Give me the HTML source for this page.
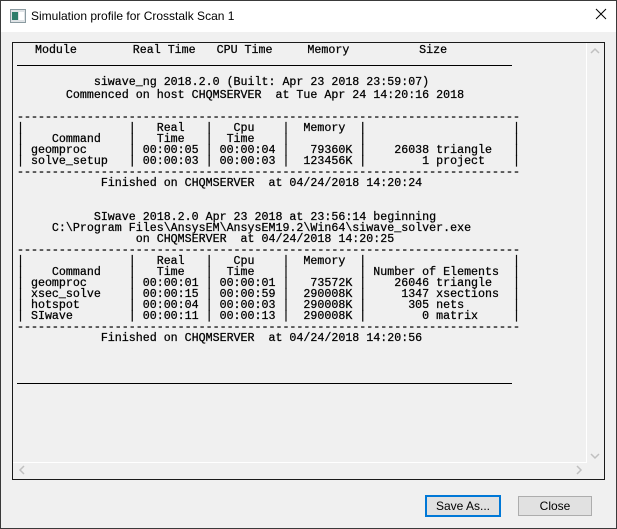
<!DOCTYPE html>
<html><head><meta charset="utf-8"><style>
body{margin:0;width:617px;height:529px;overflow:hidden;background:#f0f0f0;font-family:"Liberation Sans",sans-serif;position:relative}
.win{position:absolute;left:0;top:0;width:615px;height:527px;border:1px solid #3a3a3a;background:#f0f0f0}
.title{position:absolute;left:0;top:0;width:615px;height:31px;background:#fff}
.title .t{position:absolute;left:30px;top:8px;font-size:12px;color:#000}
.x{position:absolute;left:594px;top:7px}
.box{position:absolute;left:12px;top:42px;width:591px;height:436px;border:1px solid #1a1a1a;background:#f0f0f0}
pre{margin:0;position:absolute;font-family:"Liberation Mono",monospace;font-size:11.65px;line-height:11px;color:#000;white-space:pre;-webkit-text-stroke:0.25px #000}
.rule{position:absolute;left:17px;width:495px;height:1px;background:#000}
.btn{position:absolute;top:496px;height:18px;font-size:12px;text-align:center;line-height:18px;background:#e1e1e1;border:1px solid #adadad}
</style></head><body>
<div class="win">
<div class="title">
<svg style="position:absolute;left:9px;top:8px" width="16" height="14"><rect x="0.5" y="0.5" width="15" height="13" fill="#dfe3e6" stroke="#8a9aa0"/><rect x="2" y="3" width="6" height="8" fill="#2e7d6b"/><rect x="9" y="3" width="5" height="8" fill="#fff"/></svg>
<div class="t">Simulation profile for Crosstalk Scan 1</div>
<svg class="x" width="12" height="12"><path d="M1 1L11 11M11 1L1 11" stroke="#000" stroke-width="1"/></svg>
</div>
</div>
<div class="box"></div>
<div style="position:absolute;top:43px;width:1px;height:419px;background:#fff;left:586px"></div>
<div style="position:absolute;left:13px;top:462px;width:574px;height:1px;background:#fff"></div>
<svg style="position:absolute;left:590px;top:47px" width="10" height="8"><path d="M1 6L5 2L9 6" stroke="#c0c0c0" fill="none" stroke-width="1.5"/></svg>
<svg style="position:absolute;left:590px;top:452px" width="10" height="8"><path d="M1 2L5 6L9 2" stroke="#c0c0c0" fill="none" stroke-width="1.5"/></svg>
<svg style="position:absolute;left:18px;top:465px" width="8" height="10"><path d="M6 1L2 5L6 9" stroke="#c0c0c0" fill="none" stroke-width="1.5"/></svg>
<svg style="position:absolute;left:575px;top:465px" width="8" height="10"><path d="M2 1L6 5L2 9" stroke="#c0c0c0" fill="none" stroke-width="1.5"/></svg>
<pre style="left:21px;top:45px">  Module        Real Time   CPU Time     Memory          Size</pre>
<div class="rule" style="top:65px"></div>
<pre style="left:17px;top:77px">           siwave_ng 2018.2.0 (Built: Apr 23 2018 23:59:07)</pre>
<pre style="left:17px;top:90px;line-height:11.05px">       Commenced on host CHQMSERVER  at Tue Apr 24 14:20:16 2018

------------------------------------------------------------------------
|               |   Real   |   Cpu    |  Memory  |                     |
|    Command    |   Time   |  Time    |          |                     |
| geomproc      | 00:00:05 | 00:00:04 |   79360K |    26038 triangle   |
| solve_setup   | 00:00:03 | 00:00:03 |  123456K |        1 project    |
------------------------------------------------------------------------
            Finished on CHQMSERVER  at 04/24/2018 14:20:24


           SIwave 2018.2.0 Apr 23 2018 at 23:56:14 beginning
     C:\Program Files\AnsysEM\AnsysEM19.2\Win64\siwave_solver.exe
                 on CHQMSERVER  at 04/24/2018 14:20:25
------------------------------------------------------------------------
|               |   Real   |   Cpu    |  Memory  |                     |
|    Command    |   Time   |  Time    |          | Number of Elements  |
| geomproc      | 00:00:01 | 00:00:01 |   73572K |    26046 triangle   |
| xsec_solve    | 00:00:15 | 00:00:59 |  290008K |     1347 xsections  |
| hotspot       | 00:00:04 | 00:00:03 |  290008K |      305 nets       |
| SIwave        | 00:00:11 | 00:00:13 |  290008K |        0 matrix     |
------------------------------------------------------------------------
            Finished on CHQMSERVER  at 04/24/2018 14:20:56</pre>
<div class="rule" style="top:383px"></div>
<div class="btn" style="left:425px;width:72px;border:2px solid #0078d7;top:495px">Save As...</div>
<div class="btn" style="left:518px;width:72px">Close</div>
</body></html>
